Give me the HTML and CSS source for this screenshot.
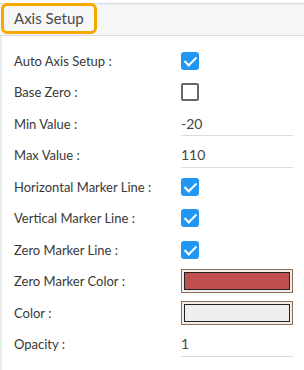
FILE: index.html
```html
<!DOCTYPE html>
<html lang="en">
<head>
    <meta charset="UTF-8">
    <meta name="viewport" content="width=device-width, initial-scale=1.0">
    <title>Axis Setup</title>
    <link rel="stylesheet" href="styles.css">
</head>
<body>
    <div class="panel">
        <div class="panel-header">
            <span class="title">Axis Setup</span>
            <span class="highlight"></span>
        </div>
        <div class="panel-body">
            <div class="row">
                <label>Auto Axis Setup :</label>
                <span class="check checked"></span>
            </div>
            <div class="row">
                <label>Base Zero :</label>
                <span class="check"></span>
            </div>
            <div class="row">
                <label>Min Value :</label>
                <input type="text" class="field" value="-20">
            </div>
            <div class="row">
                <label>Max Value :</label>
                <input type="text" class="field" value="110">
            </div>
            <div class="row">
                <label>Horizontal Marker Line :</label>
                <span class="check checked"></span>
            </div>
            <div class="row">
                <label>Vertical Marker Line :</label>
                <span class="check checked"></span>
            </div>
            <div class="row">
                <label>Zero Marker Line :</label>
                <span class="check checked"></span>
            </div>
            <div class="row">
                <label>Zero Marker Color :</label>
                <span class="swatch"><span class="swatch-fill red"></span></span>
            </div>
            <div class="row">
                <label>Color :</label>
                <span class="swatch"><span class="swatch-fill light"></span></span>
            </div>
            <div class="row">
                <label>Opacity :</label>
                <input type="text" class="field" value="1">
            </div>
        </div>
    </div>
</body>
</html>
```

FILE: styles.css
```css
body {
    margin: 0;
    padding: 0;
    font-family: Lato, "Open Sans", sans-serif;
    background: #fff;
    color: #333;
}
.panel {
    width: 304px;
    height: 370px;
    overflow: hidden;
}
.panel-header {
    position: relative;
    margin-top: 3px;
    height: 33px;
    background: #f7f7f7;
    border-top: 1px solid #dcdcdc;
    border-bottom: 1px solid #dcdcdc;
    box-shadow: inset 0 1px 0 #e3eef5;
    display: flex;
    align-items: center;
    padding-left: 14px;
    box-sizing: border-box;
}
.title {
    font-size: 15px;
    color: #4a4a4a;
    margin-top: -4px;
}
.highlight {
    position: absolute;
    left: 1px;
    top: -1px;
    width: 96px;
    height: 31px;
    border: 3px solid #f7a800;
    border-radius: 6px;
    box-sizing: border-box;
}
.panel-body {
    border-left: 2px solid #ebebeb;
    padding: 9px 0 0 12px;
    height: 340px;
}
.row {
    display: flex;
    align-items: center;
    height: 31.5px;
}
.row label {
    width: 167px;
    font-size: 13px;
    color: #383838;
}
.check {
    width: 18px;
    height: 18px;
    box-sizing: border-box;
    border: 2px solid #666;
    border-radius: 2px;
    position: relative;
}
.check.checked {
    background: #2196f3;
    border-color: #2196f3;
    border-radius: 3px;
}
.check.checked::after {
    content: "";
    position: absolute;
    left: 4px;
    top: 0px;
    width: 5px;
    height: 10px;
    border: solid #fff;
    border-width: 0 2px 2px 0;
    transform: rotate(45deg);
}
.field {
    width: 112px;
    height: 25px;
    padding: 0;
    border: none;
    border-bottom: 1px solid #dcdcdc;
    font-family: Lato, "Open Sans", sans-serif;
    font-size: 14px;
    color: #444;
    background: transparent;
    box-sizing: border-box;
    outline: none;
}
.swatch {
    width: 112px;
    height: 24px;
    padding: 2px;
    border: 1px solid #8c6d55;
    background: #f1eeeb;
    box-sizing: border-box;
    display: flex;
}
.swatch-fill {
    flex: 1;
    border: 1px solid #222;
}
.swatch-fill.red {
    background: #c0504d;
}
.swatch-fill.light {
    background: #eef0ef;
}
```
